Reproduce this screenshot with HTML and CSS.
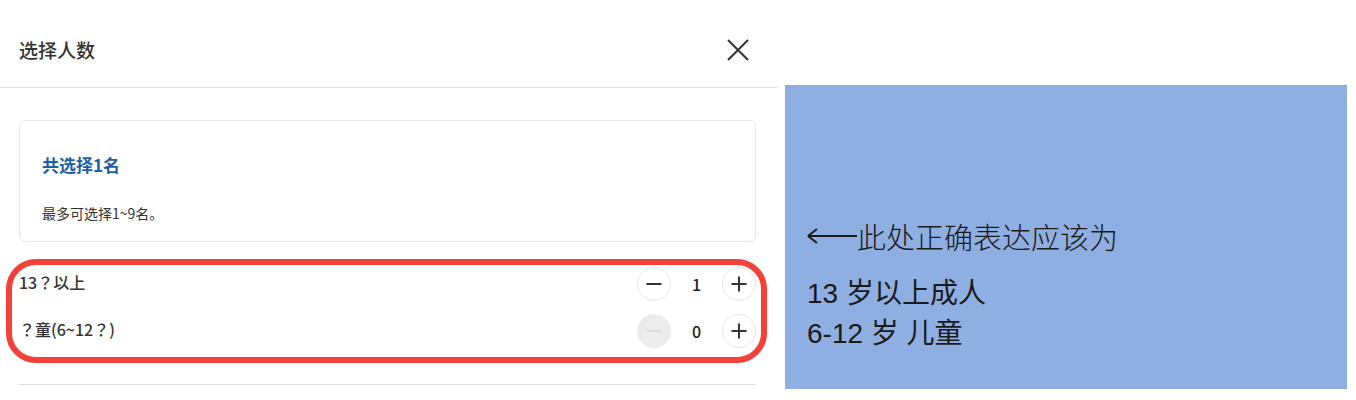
FILE: index.html
```html
<!DOCTYPE html>
<html lang="zh-CN">
<head>
<meta charset="utf-8">
<title>选择人数</title>
<link rel="stylesheet" href="styles.css">
</head>
<body>
<div class="page">
  <section class="modal">
    <header class="modal-header">
      <h1 class="modal-title">选择人数</h1>
      <button class="close-btn" aria-label="关闭">
        <svg width="24" height="24" viewBox="0 0 24 24"><path d="M2 2 L22 22 M22 2 L2 22" stroke="#333" stroke-width="2" fill="none"/></svg>
      </button>
    </header>
    <div class="modal-body">
      <div class="summary-card">
        <div class="summary-title">共选择1名</div>
        <div class="summary-desc">最多可选择1~9名。</div>
      </div>
      <div class="rows">
        <div class="row">
          <span class="row-label" lang="zh-TW">13？以上</span>
          <div class="stepper">
            <button class="step-btn"><svg width="16" height="16" viewBox="0 0 16 16"><path d="M0.5 8 H15.5" stroke="#333" stroke-width="2"/></svg></button>
            <span class="step-num">1</span>
            <button class="step-btn"><svg width="16" height="16" viewBox="0 0 16 16"><path d="M0.5 8 H15.5 M8 0.5 V15.5" stroke="#333" stroke-width="2"/></svg></button>
          </div>
        </div>
        <div class="row">
          <span class="row-label" lang="zh-TW">？童(6~12？)</span>
          <div class="stepper">
            <button class="step-btn disabled"><svg width="16" height="16" viewBox="0 0 16 16"><path d="M0.5 8 H15.5" stroke="#dcdcdc" stroke-width="2"/></svg></button>
            <span class="step-num">0</span>
            <button class="step-btn"><svg width="16" height="16" viewBox="0 0 16 16"><path d="M0.5 8 H15.5 M8 0.5 V15.5" stroke="#333" stroke-width="2"/></svg></button>
          </div>
        </div>
        <div class="annot-ring"></div>
      </div>
      <div class="bottom-rule"></div>
    </div>
  </section>
  <aside class="note">
    <div class="note-head"><svg class="note-arrow" width="50" height="20" viewBox="0 0 50 20"><path d="M1 10 H50 M1 10 L10 3 M1 10 L10 17" stroke="#1a1a1a" stroke-width="2" fill="none"/></svg><span>此处正确表达应该为</span></div>
    <div class="note-line">13 岁以上成人</div>
    <div class="note-line">6-12 岁 儿童</div>
  </aside>
</div>
</body>
</html>
```
FILE: styles.css
```css
* { box-sizing: border-box; }
html, body { margin: 0; padding: 0; background: #fff; }
body { font-family: "Noto Sans CJK SC", "Noto Sans", sans-serif; color: #333; }

.page { display: flex; align-items: flex-start; width: 1356px; height: 400px; }

.modal { width: 778px; flex: none; }

.modal-header {
  height: 88px;
  padding: 12px 28px 0 19px;
  display: flex;
  align-items: center;
  justify-content: space-between;
  border-bottom: 1px solid #e2e2e2;
}
.modal-title { margin: 0; font-size: 19px; font-weight: 500; color: #333; line-height: 24px; }
.close-btn { border: 0; background: none; padding: 0; width: 24px; height: 24px; display: flex; }

.modal-body { padding: 32px 22px 0 19px; }

.summary-card {
  border: 1px solid #e8e8e8;
  border-radius: 6px;
  padding: 32px 22px 18px;
}
.summary-title { font-size: 17px; font-weight: 700; color: #1d5ea6; line-height: 24px; }
.summary-desc { margin-top: 26px; font-size: 14px; line-height: 20px; color: #333; }

.rows { position: relative; margin-top: 18px; }
.row { height: 47px; display: flex; align-items: center; justify-content: space-between; }
.row-label { font-family: "Noto Sans CJK JP", "Noto Sans CJK TC", "Noto Sans CJK SC", sans-serif; font-size: 16px; font-weight: 500; color: #333; line-height: 20px; margin-top: -3px; }
.stepper { display: flex; align-items: center; }
.step-btn {
  width: 34px; height: 34px; border-radius: 50%;
  border: 1px solid #e6e6e6; background: #fff; padding: 0;
  display: flex; align-items: center; justify-content: center;
}
.step-btn.disabled { background: #ececec; border-color: #ececec; }
.step-num { width: 51px; text-align: center; font-size: 16px; font-weight: 500; color: #222; }

.annot-ring {
  position: absolute;
  left: -13px; top: -1px;
  width: 761px; height: 104px;
  border: 6px solid #f5413a;
  border-radius: 30px;
  pointer-events: none;
}

.bottom-rule { margin-top: 30px; border-top: 1px solid #dedede; }

.note {
  margin-left: 7px;
  margin-top: 85px;
  width: 562px;
  height: 304px;
  background: #8faee1;
  padding: 131px 0 0 22px;
  color: #1a1a1a;
}
.note-head { display: flex; align-items: center; height: 40px; margin-bottom: 18px; font-size: 29px; font-weight: 300; }
.note-arrow { flex: none; }
.note-line { font-family: "Liberation Sans", "Noto Sans CJK SC", sans-serif; font-size: 28px; line-height: 40px; }
```
